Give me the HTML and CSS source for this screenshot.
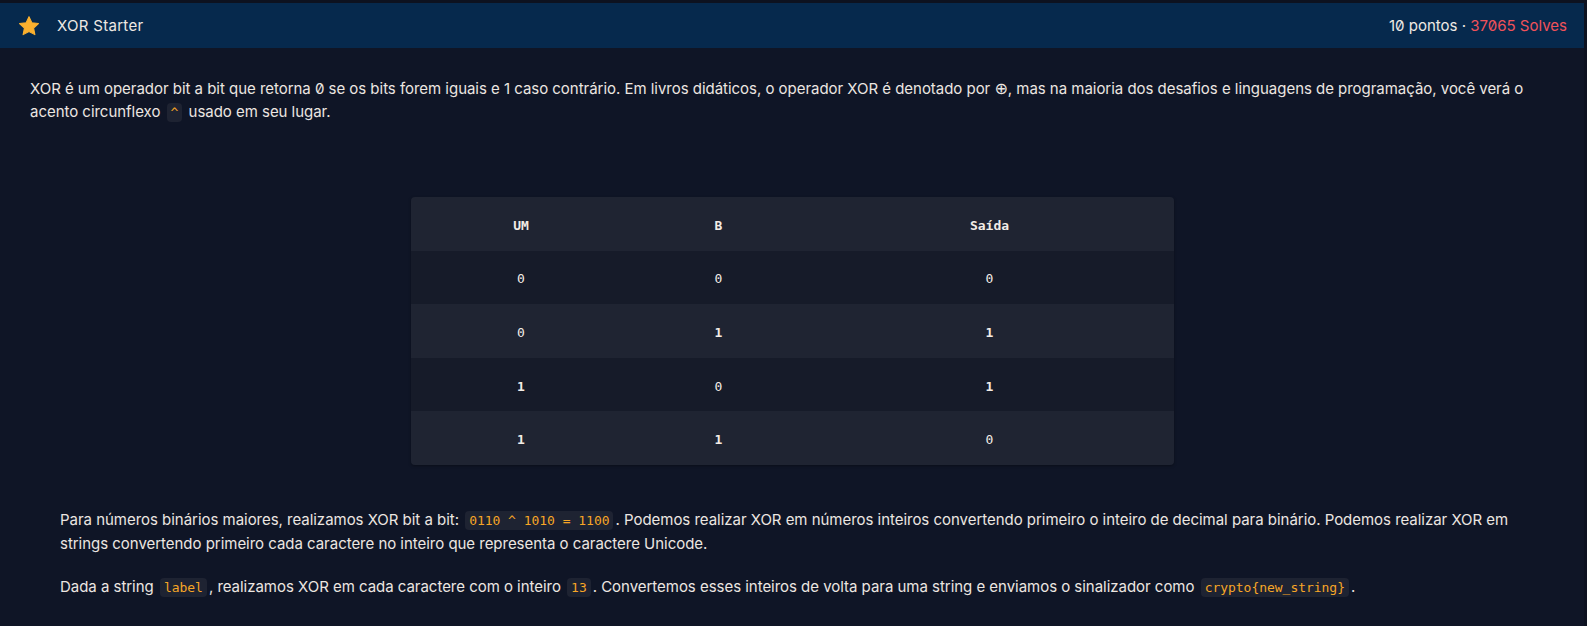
FILE: index.html
```html
<!DOCTYPE html>
<html lang="pt">
<head>
<meta charset="utf-8">
<title>XOR Starter</title>
<link rel="stylesheet" href="styles.css">
</head>
<body>
<div class="page">
  <header class="bar">
    <div class="bar-left">
      <svg class="star" width="22" height="22" viewBox="0 0 24 24" aria-hidden="true">
        <path d="M12 1.8l3.1 6.6 7.2.9-5.3 5 1.4 7.1L12 17.9l-6.4 3.5 1.4-7.1-5.3-5 7.2-.9z" fill="#fbb02e" stroke="#fbb02e" stroke-width="1.2" stroke-linejoin="round"/>
      </svg>
      <span class="title">XOR Starter</span>
    </div>
    <div class="bar-right">10 pontos · <span class="solves">37065 Solves</span></div>
  </header>

  <main class="content">
    <p class="intro">XOR é um operador bit a bit que retorna 0 se os bits forem iguais e 1 caso contrário. Em livros didáticos, o operador XOR é denotado por <span class="op">⊕</span>, mas na maioria dos desafios e linguagens de programação, você verá o acento circunflexo <code>^</code> usado em seu lugar.</p>

    <table class="truth">
      <thead>
        <tr><th class="c1">UM</th><th class="c2">B</th><th class="c3">Saída</th></tr>
      </thead>
      <tbody>
        <tr><td>0</td><td>0</td><td>0</td></tr>
        <tr><td>0</td><td class="one">1</td><td class="one">1</td></tr>
        <tr><td class="one">1</td><td>0</td><td class="one">1</td></tr>
        <tr><td class="one">1</td><td class="one">1</td><td>0</td></tr>
      </tbody>
    </table>

    <div class="details">
      <p>Para números binários maiores, realizamos XOR bit a bit: <code>0110 ^ 1010 = 1100</code>. Podemos realizar XOR em números inteiros convertendo primeiro o inteiro de decimal para binário. Podemos realizar XOR em strings convertendo primeiro cada caractere no inteiro que representa o caractere Unicode.</p>
      <p>Dada a string <code>label</code>, realizamos XOR em cada caractere com o inteiro <code>13</code>. Convertemos esses inteiros de volta para uma string e enviamos o sinalizador como <code>crypto{new_string}</code>.</p>
    </div>
  </main>
</div>
</body>
</html>
```

FILE: styles.css
```css
html, body {
  margin: 0;
  padding: 0;
  background: #0d1220;
}

body {
  font-family: Inter, "Noto Sans", sans-serif;
  font-feature-settings: "zero" 1;
  color: #ece6e1;
  height: 626px;
  overflow: hidden;
}

.page {
  margin: 3px 3px 0 0;
  background: #0f1526;
  min-height: 623px;
}

.bar {
  display: flex;
  align-items: center;
  justify-content: space-between;
  height: 45px;
  padding: 0 17px 0 18px;
  background: #06294d;
  font-size: 15px;
}

.bar-left {
  display: flex;
  align-items: center;
  gap: 17px;
}

.star {
  display: block;
}

.title {
  color: #efe9e4;
  letter-spacing: 0.3px;
}

.bar-right {
  color: #efe9e4;
}

.solves {
  color: #f0525a;
}

.content {
  padding: 29px 30px 0 30px;
}

p {
  margin: 0;
  font-size: 15px;
  line-height: 23px;
  letter-spacing: -0.03px;
}

.op {
  font-family: "DejaVu Sans", sans-serif;
  font-size: 16px;
  line-height: 1;
}

code {
  font-family: "DejaVu Sans Mono", monospace;
  font-size: 13px;
  color: #f7a626;
  background: #1e2332;
  padding: 2px 4px;
  margin: 0 2px;
  border-radius: 4px;
}

.truth {
  margin: 73px auto 0;
  border-collapse: collapse;
  border-radius: 4px;
  overflow: hidden;
  font-family: "DejaVu Sans Mono", monospace;
  font-size: 13px;
  color: #f2ece6;
  box-shadow: 0 1px 3px rgba(0, 0, 0, 0.35);
}

.truth th,
.truth td {
  height: 53.6px;
  padding: 3px 0 0;
  box-sizing: border-box;
  text-align: center;
}

.truth th {
  font-weight: bold;
  background: #1f2432;
}

.truth td.one {
  font-weight: bold;
}

.truth .c1 { width: 221px; }
.truth .c2 { width: 174px; }
.truth .c3 { width: 368px; }

.truth tbody tr:nth-child(odd) td {
  background: #161b29;
}

.truth tbody tr:nth-child(even) td {
  background: #1f2432;
}

.details {
  padding: 43px 0 0 30px;
  display: flex;
  flex-direction: column;
  gap: 20px;
}
```
